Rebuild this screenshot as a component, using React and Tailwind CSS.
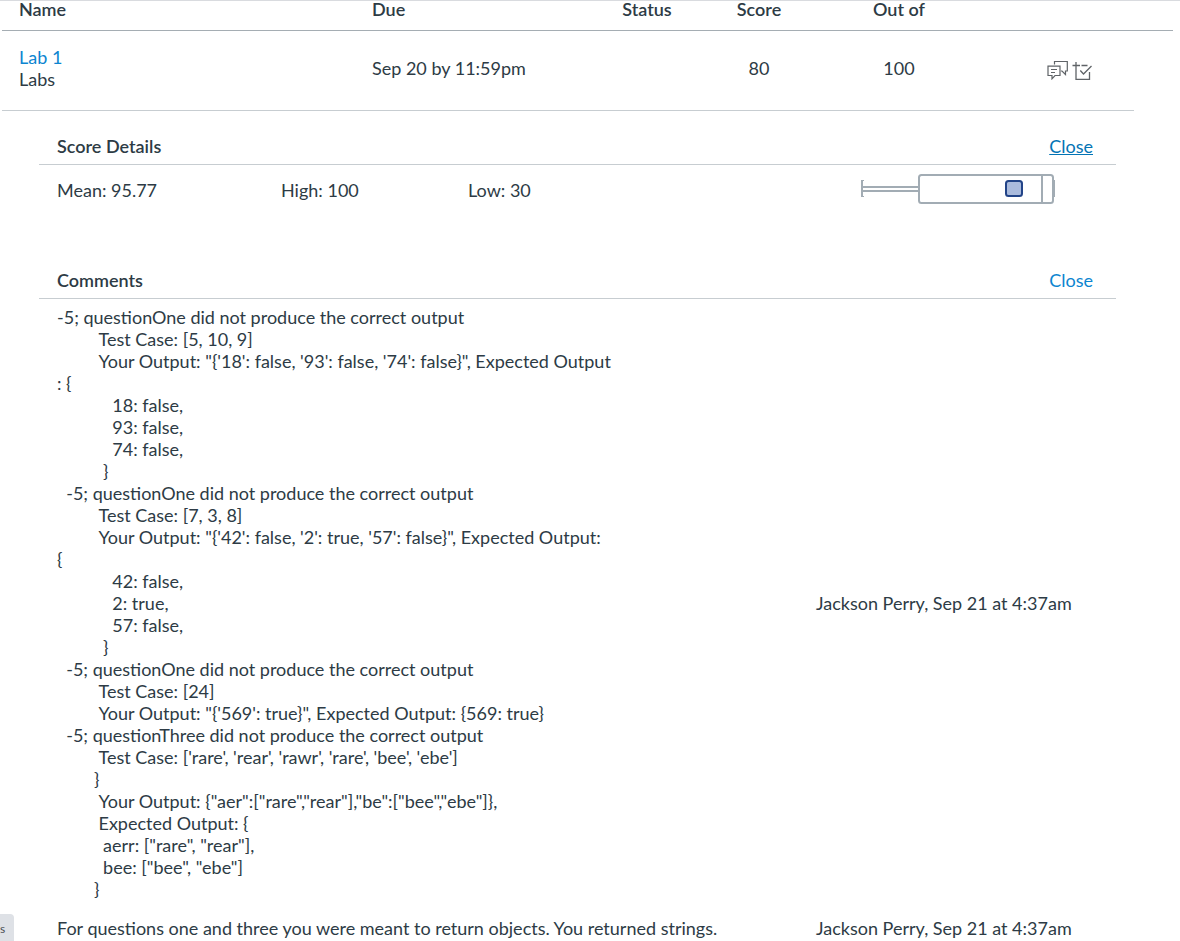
import React from "react";

const FIRST_COMMENT = `-5; questionOne did not produce the correct output
         Test Case: [5, 10, 9]
         Your Output: "{'18': false, '93': false, '74': false}", Expected Output
: {
            18: false,
            93: false,
            74: false,
          }
  -5; questionOne did not produce the correct output
         Test Case: [7, 3, 8]
         Your Output: "{'42': false, '2': true, '57': false}", Expected Output:
{
            42: false,
            2: true,
            57: false,
          }
  -5; questionOne did not produce the correct output
         Test Case: [24]
         Your Output: "{'569': true}", Expected Output: {569: true}
  -5; questionThree did not produce the correct output
         Test Case: ['rare', 'rear', 'rawr', 'rare', 'bee', 'ebe']
        }
         Your Output: {"aer":["rare","rear"],"be":["bee","ebe"]},
         Expected Output: {
          aerr: ["rare", "rear"],
          bee: ["bee", "ebe"]
        }`;

const COMMENTS = [
  { text: FIRST_COMMENT, author: "Jackson Perry, Sep 21 at 4:37am" },
  {
    text: "For questions one and three you were meant to return objects. You returned strings.",
    author: "Jackson Perry, Sep 21 at 4:37am",
  },
];

function CommentsIcon() {
  return (
    <svg width="22" height="20" viewBox="0 0 22 20" fill="none" stroke="#5f6367" strokeWidth="1.2" aria-hidden="true">
      <path d="M7.5 4.5V1.5H20.3V11H18.5V14.5L15 11H14" />
      <path d="M1 6.2H13V15.5H8L5 18.8V15.5H1Z" />
      <path d="M4 9.5H10M4 12.5H8" />
    </svg>
  );
}

function RubricIcon() {
  return (
    <svg width="22" height="20" viewBox="0 0 22 20" fill="none" stroke="#5f6367" strokeWidth="1.3" aria-hidden="true">
      <path d="M0.5 5.5H8M9.5 5.5H15.5M4 2V19.3H17.5V12" />
      <path d="M8.3 10.5L11.5 14L19.5 6" />
    </svg>
  );
}

function ScorePlot() {
  return (
    <svg width="196" height="32" viewBox="0 0 196 32" fill="none" role="img" aria-label="Score distribution">
      <g fill="#a2acb4">
        <rect x="1" y="7" width="2" height="17" />
        <rect x="3" y="7" width="1" height="1" />
        <rect x="3" y="23" width="1" height="1" />
        <rect x="3" y="13" width="56" height="2" />
        <rect x="3" y="17" width="56" height="2" />
        <rect x="193" y="7" width="2" height="17" />
      </g>
      <rect x="59" y="2" width="134" height="28" rx="2.5" fill="#fff" stroke="#a2acb4" strokeWidth="2" />
      <rect x="181" y="2" width="2" height="28" fill="#a2acb4" />
      <rect x="146" y="8" width="16" height="15" rx="2.5" fill="#aabbdd" stroke="#224488" strokeWidth="2" />
    </svg>
  );
}

function SectionHeader({ title, underlined }) {
  return (
    <div className="flex items-center justify-between border-b border-[#c7cdd1] pb-[7px] pl-[18px] pr-[23px]">
      <h2 className="font-semibold">{title}</h2>
      <button type="button" className={underlined ? "text-[#0374b5] underline" : "text-[#0c85d0]"}>
        Close
      </button>
    </div>
  );
}

export default function App() {
  return (
    <main className="min-h-screen border-t border-[#d9dbdf] bg-white pl-[2px] pr-[7px] font-['Lato',sans-serif] text-[18px] leading-[22px] text-[#2d3b45]">
      <table className="w-full table-fixed border-collapse">
        <colgroup>
          <col />
          <col className="w-[235px]" />
          <col className="w-[114px]" />
          <col className="w-[110px]" />
          <col className="w-[170px]" />
          <col className="w-[150px]" />
          <col className="w-[39px]" />
        </colgroup>
        <thead>
          <tr className="border-b border-[#a5adb3] text-center leading-4">
            <th scope="col" className="pb-[13px] pl-[17px] text-left font-semibold">Name</th>
            <th scope="col" className="pb-[13px] pl-[17px] text-left font-semibold">Due</th>
            <th scope="col" className="pb-[13px] font-semibold">Status</th>
            <th scope="col" className="pb-[13px] font-semibold">Score</th>
            <th scope="col" className="pb-[13px] font-semibold">Out of</th>
            <td className="pb-[13px]" />
            <td className="pb-[13px]" />
          </tr>
        </thead>
        <tbody>
          <tr>
            <th scope="row" className="border-b border-[#c7cdd1] pb-5 pl-[17px] pt-[15px] text-left font-normal">
              <a href="#lab-1" className="block text-[#0c85d0]">Lab 1</a>
              <span className="block">Labs</span>
            </th>
            <td className="border-b border-[#c7cdd1] pb-[5px] pl-[17px]">Sep 20 by 11:59pm</td>
            <td className="border-b border-[#c7cdd1]" />
            <td className="border-b border-[#c7cdd1] pb-[5px] text-center">80</td>
            <td className="border-b border-[#c7cdd1] pb-[5px] text-center">100</td>
            <td className="border-b border-[#c7cdd1] pb-[2px]">
              <div className="flex justify-end gap-[3px] pr-10">
                <button type="button" aria-label="Toggle comments"><CommentsIcon /></button>
                <button type="button" aria-label="Toggle score details"><RubricIcon /></button>
              </div>
            </td>
            <td />
          </tr>
        </tbody>
      </table>

      <div className="pl-[37px] pr-[57px] pt-6">
        <section>
          <SectionHeader title="Score Details" underlined />
          <div className="flex items-start pl-[18px] pr-[60px] pt-2">
            <div className="flex grow pt-[6px]">
              <span className="w-56">Mean: 95.77</span>
              <span className="w-[187px]">High: 100</span>
              <span>Low: 30</span>
            </div>
            <ScorePlot />
          </div>
        </section>

        <section className="pt-16">
          <SectionHeader title="Comments" />
          <table className="w-full table-fixed border-collapse">
            <colgroup>
              <col />
              <col className="w-[300px]" />
            </colgroup>
            <tbody>
              {COMMENTS.map((comment, i) => (
                <tr key={i}>
                  <td className="whitespace-pre-wrap pb-[10px] pl-[18px] pt-[7px]">{comment.text}</td>
                  <td className="pb-[10px] pt-[7px]">{comment.author}</td>
                </tr>
              ))}
            </tbody>
          </table>
        </section>
      </div>

      <div className="fixed bottom-0 left-0 h-[27px] w-[14px] rounded-tr-[4px] bg-[#dee1e6] pt-1 text-[12px] text-[#4b4f54]">
        s
      </div>
    </main>
  );
}
